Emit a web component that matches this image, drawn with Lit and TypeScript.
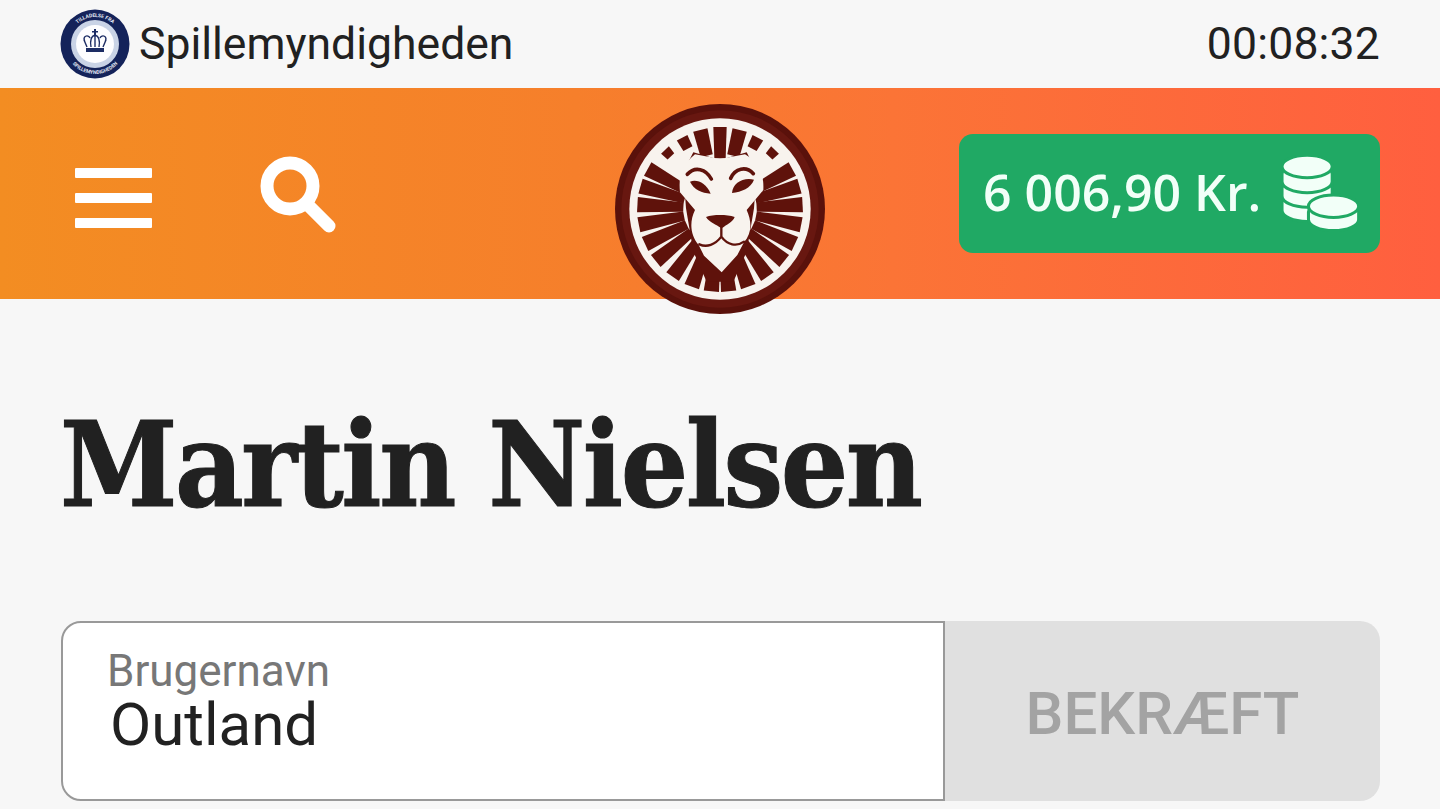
import { LitElement, html, css, svg } from "lit";
import { customElement } from "lit/decorators.js";

const RAYS: [number, number, number, number][] = [
  [0, 152, 246, 40],
  [14, 165, 244, 44], [-14, 165, 244, 44],
  [28, 205, 242, 36], [-28, 205, 242, 36],
  [43, 216, 242, 32], [-43, 216, 242, 32],
  ...[61, 74, 87, 101, 115, 129, 145, 160, 174].flatMap((a): [number, number, number, number][] => [
    [a, 110, 248, 46],
    [-a, 110, 248, 46],
  ]),
];

function ray([a, r0, r1, w]: [number, number, number, number]) {
  const inner = r0 < 130 ? w * 0.6 : w * 0.85;
  const top = 342 - r1;
  const bottom = 342 - r0;
  const points = `${360 - w / 2},${top} ${360 + w / 2},${top} ${360 + inner / 2},${bottom} ${360 - inner / 2},${bottom}`;
  return svg`<polygon class="dark" points=${points} transform="rotate(${a} 360 342)"></polygon>`;
}

function disc(cx: number, cy: number, h = 22) {
  const rx = 74, ry = 33;
  return svg`<path class="coin" d="M${cx - rx} ${cy} v${h} a${rx} ${ry} 0 0 0 ${2 * rx} 0 v${-h} a${rx} ${ry} 0 0 0 ${-2 * rx} 0 z"></path>`;
}

@customElement("app-root")
export class AppRoot extends LitElement {
  static styles = css`
    :host { display: block; width: 100%; height: 809px; overflow: hidden; background: #f7f7f7; font-family: Roboto, sans-serif; color: #212121; }
    .status { height: 88px; display: flex; align-items: center; justify-content: space-between; padding: 0 60px; box-sizing: border-box; font-size: 44.5px; }
    .status-left { display: flex; align-items: center; gap: 9px; }
    .crest { width: 70px; height: 70px; display: block; }
    .clock { letter-spacing: 0.2px; }
    .header { position: relative; height: 211px; display: flex; align-items: center; box-sizing: border-box; padding: 0 60px 0 75px; background: linear-gradient(90deg, #f38d22 0%, #f67f2b 40%, #fb7436 62%, #ff5f3f 100%); }
    .menu { width: 77px; display: flex; flex-direction: column; gap: 15px; margin-top: 9px; }
    .menu span { display: block; height: 10px; background: #fff; border-radius: 1px; }
    .search { width: 78px; height: 78px; margin-left: 107px; margin-top: 3px; display: block; }
    .logo { position: absolute; left: 600px; top: 7px; width: 240px; height: 225px; }
    .ring-out { fill: #5a110b; }
    .ring-in { fill: #681710; }
    .dark { fill: #5f120b; }
    .cream { fill: #f8f3ee; }
    .line { fill: none; stroke: #5f120b; stroke-width: 11; stroke-linecap: round; stroke-linejoin: round; }
    .thin { stroke-width: 7; }
    .balance { margin-left: auto; width: 421px; height: 119px; box-sizing: border-box; background: #20a964; border-radius: 14px; display: flex; align-items: center; padding: 0 21px 0 24px; color: #f2fff8; font-family: "Open Sans", sans-serif; font-weight: 600; font-size: 50px; justify-content: space-between; }
    .balance span { margin-top: -4px; }
    .coins { width: 78px; height: 77px; display: block; }
    .coin { fill: #f2fff8; stroke: #20a964; stroke-width: 9; }
    h1 { margin: 0; padding: 101px 0 0 60px; font-family: "DejaVu Serif", serif; font-stretch: condensed; font-weight: 700; font-size: 118px; line-height: 130px; color: #212121; letter-spacing: -2.5px; -webkit-text-stroke: 1px #212121; }
    .form { display: flex; margin: 91px 60px 0 61px; height: 180px; }
    .field { width: 884px; box-sizing: border-box; background: #fff; border: 2px solid #999; border-radius: 20px 0 0 20px; padding: 25px 0 0 44px; }
    .label { font-size: 44px; line-height: 47px; color: #777; }
    .value { font-size: 60px; line-height: 60px; margin-left: 3px; color: #212121; }
    .confirm { flex: 1; background: #e0e0e0; border-radius: 0 20px 20px 0; display: flex; align-items: center; justify-content: center; color: #a3a3a3; font-weight: 500; font-size: 60px; padding-top: 4px; box-sizing: border-box; }
  `;

  render() {
    return html`
      <div class="status">
        <div class="status-left">
          <svg class="crest" viewBox="0 0 70 70">
            <circle cx="35" cy="35" r="34.5" fill="#14235a"></circle>
            <circle cx="35" cy="35" r="24" fill="#c9d3e6"></circle>
            <circle cx="35" cy="35" r="19" fill="#fdfdff"></circle>
            <defs>
              <path id="arcTop" d="M8 35 A27 27 0 0 1 62 35"></path>
              <path id="arcBottom" d="M5 35 A30 30 0 0 0 65 35"></path>
            </defs>
            <text font-family="Roboto" font-size="5" font-weight="700" fill="#e6ebf5" text-anchor="middle"><textPath href="#arcTop" startOffset="50%">TILLADELSE FRA</textPath></text>
            <text font-family="Roboto" font-size="5" font-weight="700" fill="#e6ebf5" text-anchor="middle"><textPath href="#arcBottom" startOffset="50%">SPILLEMYNDIGHEDEN</textPath></text>
            <path d="M25 33 C22 27 28 25 30 29 M45 33 C48 27 42 25 40 29 M35 26 C31 27 30 32 31 38 M35 26 C39 27 40 32 39 38 M35 26 V38 M27 38 L24 31 M43 38 L46 31" fill="none" stroke="#1c2c64" stroke-width="1.4"></path>
            <path d="M26 39 H44 V43 H26 Z M34 20 h2 v2 h2 v1.5 h-2 v2.5 h-2 v-2.5 h-2 v-1.500 h2 z" fill="#1c2c64"></path>
          </svg>
          <span>Spillemyndigheden</span>
        </div>
        <span class="clock">00:08:32</span>
      </div>
      <div class="header">
        <div class="menu"><span></span><span></span><span></span></div>
        <svg class="search" viewBox="0 0 78 78">
          <circle cx="31" cy="30" r="23" fill="none" stroke="#fff" stroke-width="13"></circle>
          <path d="M48 48 L70 70" stroke="#fff" stroke-width="13" stroke-linecap="round"></path>
        </svg>
        <svg class="logo" viewBox="0 0 720 675">
          <circle cx="360" cy="342" r="315" class="ring-out"></circle>
          <circle cx="360" cy="342" r="296" class="ring-in"></circle>
          <circle cx="360" cy="342" r="272" class="cream"></circle>
          ${RAYS.map(ray)}
          <path class="dark" d="M280 172 L360 195 L440 172 L470 230 L462 340 L440 470 L400 560 L320 560 L280 470 L258 340 L250 230 Z"></path>
          <path class="cream" d="M285 178 L360 192 L435 178 L462 195 C480 215 492 240 490 285 L440 345 C456 380 456 415 432 442 L412 480 L365 532 L312 482 L296 450 C270 420 268 380 285 345 L240 292 C235 245 245 210 285 178 Z"></path>
          <path class="line" d="M262 238 C285 212 318 222 334 252"></path>
          <path class="line" d="M392 250 C405 220 438 212 460 236"></path>
          <path class="dark" d="M270 260 C292 252 318 264 332 296 C305 294 282 284 270 260 Z"></path>
          <path class="dark" d="M396 294 C398 264 430 246 462 254 C452 280 425 290 396 294 Z"></path>
          <path class="dark" d="M318 366 C340 358 380 358 404 366 C398 382 378 390 368 398 L362 398 C350 390 328 382 318 366 Z"></path>
          <path class="line thin" d="M364 396 V425 C345 450 320 458 298 448 M364 425 C382 450 410 456 432 440"></path>
        </svg>
        <div class="balance">
          <span>6 006,90 Kr.</span>
          <svg class="coins" viewBox="995 95 230 225">
            ${disc(1072, 235)}
            ${disc(1072, 193)}
            ${disc(1072, 150)}
            ${disc(1072, 128, 0)}
            ${disc(1150, 262)}
            ${disc(1150, 245, 0)}
          </svg>
        </div>
      </div>
      <h1>Martin Nielsen</h1>
      <div class="form">
        <div class="field">
          <div class="label">Brugernavn</div>
          <div class="value">Outland</div>
        </div>
        <div class="confirm">BEKRÆFT</div>
      </div>
    `;
  }
}
